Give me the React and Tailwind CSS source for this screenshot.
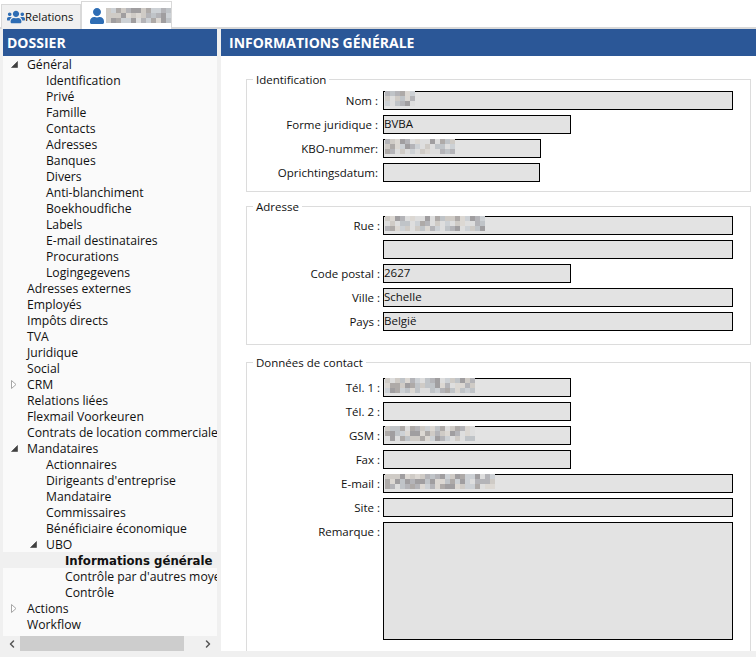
import React from 'react';
import { FaUser, FaUsers } from 'react-icons/fa';
import { LuChevronLeft, LuChevronRight } from 'react-icons/lu';

const treeItems = [
  { label: 'Général', level: 1, arrow: 'open' },
  { label: 'Identification', level: 2 },
  { label: 'Privé', level: 2 },
  { label: 'Famille', level: 2 },
  { label: 'Contacts', level: 2 },
  { label: 'Adresses', level: 2 },
  { label: 'Banques', level: 2 },
  { label: 'Divers', level: 2 },
  { label: 'Anti-blanchiment', level: 2 },
  { label: 'Boekhoudfiche', level: 2 },
  { label: 'Labels', level: 2 },
  { label: 'E-mail destinataires', level: 2 },
  { label: 'Procurations', level: 2 },
  { label: 'Logingegevens', level: 2 },
  { label: 'Adresses externes', level: 1 },
  { label: 'Employés', level: 1 },
  { label: 'Impôts directs', level: 1 },
  { label: 'TVA', level: 1 },
  { label: 'Juridique', level: 1 },
  { label: 'Social', level: 1 },
  { label: 'CRM', level: 1, arrow: 'closed' },
  { label: 'Relations liées', level: 1 },
  { label: 'Flexmail Voorkeuren', level: 1 },
  { label: 'Contrats de location commerciale', level: 1 },
  { label: 'Mandataires', level: 1, arrow: 'open' },
  { label: 'Actionnaires', level: 2 },
  { label: "Dirigeants d'entreprise", level: 2 },
  { label: 'Mandataire', level: 2 },
  { label: 'Commissaires', level: 2 },
  { label: 'Bénéficiaire économique', level: 2 },
  { label: 'UBO', level: 2, arrow: 'open' },
  { label: 'Informations générale', level: 3, selected: true },
  { label: "Contrôle par d'autres moyens", level: 3 },
  { label: 'Contrôle', level: 3 },
  { label: 'Actions', level: 1, arrow: 'closed' },
  { label: 'Workflow', level: 1 },
];

// the names and numbers are pixelated in the screenshot
const Mosaic = ({ width, rows = 3, seed = 1, className = '' }) => {
  const shades = ['#b4b4b8', '#cfcbc6', '#dedede', '#a09ea0', '#c0c4c8', '#dcd8d3', '#aeaaa8', '#cdd1d5'];
  const cols = Math.ceil(width / 5);
  const cells = [];
  let n = seed * 7 + 3;
  for (let i = 0; i < cols * rows; i++) {
    n = (n * 31 + 11) % 257;
    cells.push(shades[n % shades.length]);
  }
  return (
    <div className={`grid grid-cols-[repeat(auto-fill,5px)] auto-rows-[5px] ${className}`} style={{ width: cols * 5 }}>
      {cells.map((color, i) => (
        <div key={i} style={{ background: color }} />
      ))}
    </div>
  );
};

const Arrow = ({ type }) =>
  type === 'open' ? (
    <svg width="7" height="7" viewBox="0 0 7 7" className="absolute left-[-16px] top-[5px]">
      <path d="M6.5 0.5V6.5H0.5Z" fill="#404040" stroke="#404040" strokeWidth="0.6" />
    </svg>
  ) : (
    <svg width="6" height="9" viewBox="0 0 6 9" className="absolute left-[-16px] top-[4px]">
      <path d="M0.5 0.5L5 4.5L0.5 8.5Z" fill="#fff" stroke="#a6a6a6" />
    </svg>
  );

const TreeRow = ({ item }) => {
  const indent = { 1: 'pl-[24px]', 2: 'pl-[43px]', 3: 'pl-[62px]' }[item.level];
  return (
    <div className={`h-[16px] leading-[18px] whitespace-nowrap ${indent} ${item.selected ? 'bg-[#f0f0f0]' : ''}`}>
      <span
        className={`relative inline-block ${
          item.selected ? "font-bold text-[11.75px] font-['DejaVu_Sans',sans-serif]" : ''
        }`}
      >
        {item.arrow && <Arrow type={item.arrow} />}
        {item.label}
      </span>
    </div>
  );
};

const Field = ({ label, value, width = 'w-[350px]', height = 'h-[19px]', labelWidth = 'w-[133px]', gap = 'mr-[3px]', top, blur }) => (
  <div className={`flex ${top ? 'items-start' : 'items-center'}`}>
    <div className={`${labelWidth} ${gap} shrink-0 text-right whitespace-nowrap ${top ? 'pt-[1px]' : ''}`}>{label}</div>
    <div className={`relative ${width} ${height} shrink-0 border border-black bg-[#e3e3e3] leading-[16px]`}>
      {value}
      {blur && <Mosaic width={blur.width} rows={blur.rows} seed={blur.seed} className="absolute top-[-1px] left-[1px]" />}
    </div>
  </div>
);

const Group = ({ title, className, children }) => (
  <fieldset className={`ml-[25px] mr-[5px] border border-[#dcdcdc] ${className}`}>
    <legend className="ml-[6px] h-[16px] px-[3px] leading-[18px]">{title}</legend>
    <div className="flex flex-col gap-[5px]">{children}</div>
  </fieldset>
);

const PanelHeader = ({ children }) => (
  <div className="flex h-[27px] shrink-0 items-center bg-[#2b5797] pl-[4px] text-[14px] font-bold text-white">
    {children}
  </div>
);

const App = () => {
  const narrow = { labelWidth: 'w-[131px]', gap: 'mr-[5px]' };

  return (
    <div className="flex h-[657px] w-[756px] flex-col overflow-hidden bg-[#f0f0f0] font-['Open_Sans',sans-serif] text-[11.5px] text-[#111]">
      {/* Tabs */}
      <div className="relative flex h-[29px] shrink-0 items-end border-b-2 border-[#d9d9d9] bg-white pl-[1px]">
        <div className="mb-[-2px] flex h-[25px] w-[80px] items-center border border-b-0 border-[#d9d9d9] bg-[#f0f0f0] pl-[5px] text-[11.3px]">
          <FaUsers size={18} className="text-[#2e6db4]" />
          Relations
        </div>
        <div className="relative mb-[-2px] flex h-[28px] w-[91px] items-center border border-b-0 border-[#d9d9d9] bg-white pl-[7px]">
          <FaUser size={16} className="text-[#2e6db4]" />
          <Mosaic width={62} rows={3} seed={5} className="absolute left-[24px] top-[6px]" />
        </div>
      </div>

      <div className="flex min-h-0 flex-1 pb-[6px] pl-[3px]">
        {/* Dossier tree */}
        <div className="flex w-[214px] shrink-0 flex-col bg-[#fafafa]">
          <PanelHeader>DOSSIER</PanelHeader>
          <div className="h-[580px] overflow-hidden text-[12.2px]">
            {treeItems.map((item) => (
              <TreeRow key={item.label} item={item} />
            ))}
          </div>
          <div className="flex h-[15px] items-center justify-between bg-[#f0f0f0] text-[#555]">
            <LuChevronLeft size={12} strokeWidth={3} className="ml-[3px]" />
            <div className="ml-[2px] mr-auto h-full w-[164px] bg-[#cdcdcd]" />
            <LuChevronRight size={12} strokeWidth={3} className="mr-[3px]" />
          </div>
        </div>

        {/* Form */}
        <div className="ml-[4px] flex-1 overflow-hidden bg-white">
          <PanelHeader>
            <span className="pl-[4px]">INFORMATIONS GÉNÉRALE</span>
          </PanelHeader>

          <Group title="Identification" className="mt-[15px] pb-[9px] pt-[4px]">
            <Field label="Nom :" {...narrow} blur={{ width: 28, rows: 3, seed: 1 }} />
            <Field label="Forme juridique :" value="BVBA" width="w-[188px]" {...narrow} />
            <Field label="KBO-nummer:" width="w-[158px]" {...narrow} blur={{ width: 68, rows: 3, seed: 2 }} />
            <Field label="Oprichtingsdatum:" width="w-[157px]" {...narrow} />
          </Group>

          <Group title="Adresse" className="mt-[6px] pb-[13px] pt-[2px]">
            <Field label="Rue :" blur={{ width: 100, rows: 3, seed: 3 }} />
            <Field label="" />
            <Field label="Code postal :" value="2627" width="w-[188px]" />
            <Field label="Ville :" value="Schelle" />
            <Field label="Pays :" value="België" />
          </Group>

          <Group title="Données de contact" className="mt-[9px] pb-[20px] pt-[8px]">
            <Field label="Tél. 1 :" width="w-[188px]" blur={{ width: 88, rows: 3, seed: 4 }} />
            <Field label="Tél. 2 :" width="w-[188px]" />
            <Field label="GSM :" width="w-[188px]" blur={{ width: 88, rows: 3, seed: 6 }} />
            <Field label="Fax :" width="w-[188px]" />
            <Field label="E-mail :" blur={{ width: 106, rows: 3, seed: 7 }} />
            <Field label="Site :" />
            <Field label="Remarque :" height="h-[118px]" top />
          </Group>
        </div>
      </div>
    </div>
  );
};

export default App;
